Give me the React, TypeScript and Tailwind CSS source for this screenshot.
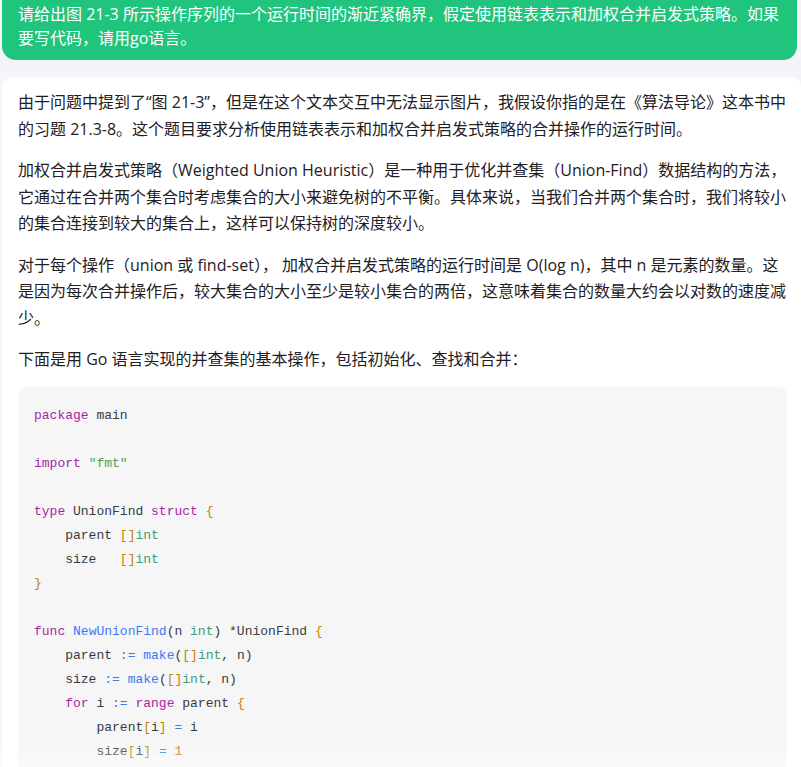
import type { ReactNode } from "react";

const K = ({ children }: { children: ReactNode }) => <span className="text-[#a626a4]">{children}</span>;
const F = ({ children }: { children: ReactNode }) => <span className="text-[#4078f2]">{children}</span>;
const B = ({ children }: { children: ReactNode }) => <span className="text-[#c18401]">{children}</span>;
const T = ({ children }: { children: ReactNode }) => <span className="text-[#3f9c7a]">{children}</span>;
const S = ({ children }: { children: ReactNode }) => <span className="text-[#50a14f]">{children}</span>;
const N = ({ children }: { children: ReactNode }) => <span className="text-[#c07a12]">{children}</span>;

const codeLines: ReactNode[] = [
  <>
    <K>package</K> main
  </>,
  <>&nbsp;</>,
  <>
    <K>import</K> <S>"fmt"</S>
  </>,
  <>&nbsp;</>,
  <>
    <K>type</K> UnionFind <K>struct</K> <B>{"{"}</B>
  </>,
  <>
    {"    "}parent <B>[]</B>
    <T>int</T>
  </>,
  <>
    {"    "}size{"   "}
    <B>[]</B>
    <T>int</T>
  </>,
  <>
    <B>{"}"}</B>
  </>,
  <>&nbsp;</>,
  <>
    <K>func</K> <F>NewUnionFind</F>(n <T>int</T>) *UnionFind <B>{"{"}</B>
  </>,
  <>
    {"    "}parent <F>:=</F> <F>make</F>(<B>[]</B>
    <T>int</T>, n)
  </>,
  <>
    {"    "}size <F>:=</F> <F>make</F>(<B>[]</B>
    <T>int</T>, n)
  </>,
  <>
    {"    "}
    <K>for</K> i <F>:=</F> <K>range</K> parent <B>{"{"}</B>
  </>,
  <>
    {"        "}parent<B>[</B>i<B>]</B> <F>=</F> i
  </>,
  <>
    {"        "}size<B>[</B>i<B>]</B> <F>=</F> <N>1</N>
  </>,
];

const Para = ({ lines, last }: { lines: string[]; last?: boolean }) => (
  <p className={`leading-[26.5px] whitespace-nowrap ${last ? "" : "mb-[15px]"}`}>
    {lines.map((l, i) => (
      <span key={i} className="block">
        {l}
      </span>
    ))}
  </p>
);

export default function App() {
  return (
    <div
      className="relative h-[767px] overflow-hidden bg-[#f3f5f8] text-[16px] text-[#1f2024]"
      style={{ fontFamily: '"Open Sans", "Noto Sans CJK SC", sans-serif' }}
    >
      <div className="ml-[2px] mr-[4px] rounded-b-[14px] bg-[#21c47d] pl-[16px] pt-[2px] pb-[10px] text-white leading-[24px] whitespace-nowrap">
        <span className="block">请给出图 21-3 所示操作序列的一个运行时间的渐近紧确界，假定使用链表表示和加权合并启发式策略。如果</span>
        <span className="block">要写代码，请用go语言。</span>
      </div>

      <div className="ml-[2px] mt-[17px] rounded-t-[10px] bg-white pl-[16px] pr-[14px] pt-[12px] pb-10">
        <Para
          lines={[
            "由于问题中提到了“图 21-3”，但是在这个文本交互中无法显示图片，我假设你指的是在《算法导论》这本书中",
            "的习题 21.3-8。这个题目要求分析使用链表表示和加权合并启发式策略的合并操作的运行时间。",
          ]}
        />
        <Para
          lines={[
            "加权合并启发式策略（Weighted Union Heuristic）是一种用于优化并查集（Union-Find）数据结构的方法，",
            "它通过在合并两个集合时考虑集合的大小来避免树的不平衡。具体来说，当我们合并两个集合时，我们将较小",
            "的集合连接到较大的集合上，这样可以保持树的深度较小。",
          ]}
        />
        <Para
          lines={[
            "对于每个操作（union 或 find-set）， 加权合并启发式策略的运行时间是 O(log n)，其中 n 是元素的数量。这",
            "是因为每次合并操作后，较大集合的大小至少是较小集合的两倍，这意味着集合的数量大约会以对数的速度减",
            "少。",
          ]}
        />
        <Para last lines={["下面是用 Go 语言实现的并查集的基本操作，包括初始化、查找和合并："]} />

        <pre
          className="mt-[14px] rounded-[8px] bg-[#f6f6f7] px-[16px] pt-[17px] pb-4 text-[13px] leading-[24px] text-[#383a42]"
          style={{ fontFamily: '"Liberation Mono", "DejaVu Sans Mono", monospace' }}
        >
          {codeLines.map((l, i) => (
            <div key={i}>{l}</div>
          ))}
        </pre>
      </div>

      <div className="pointer-events-none absolute inset-x-0 bottom-0 h-[30px] bg-gradient-to-b from-transparent to-white/45" />
    </div>
  );
}
